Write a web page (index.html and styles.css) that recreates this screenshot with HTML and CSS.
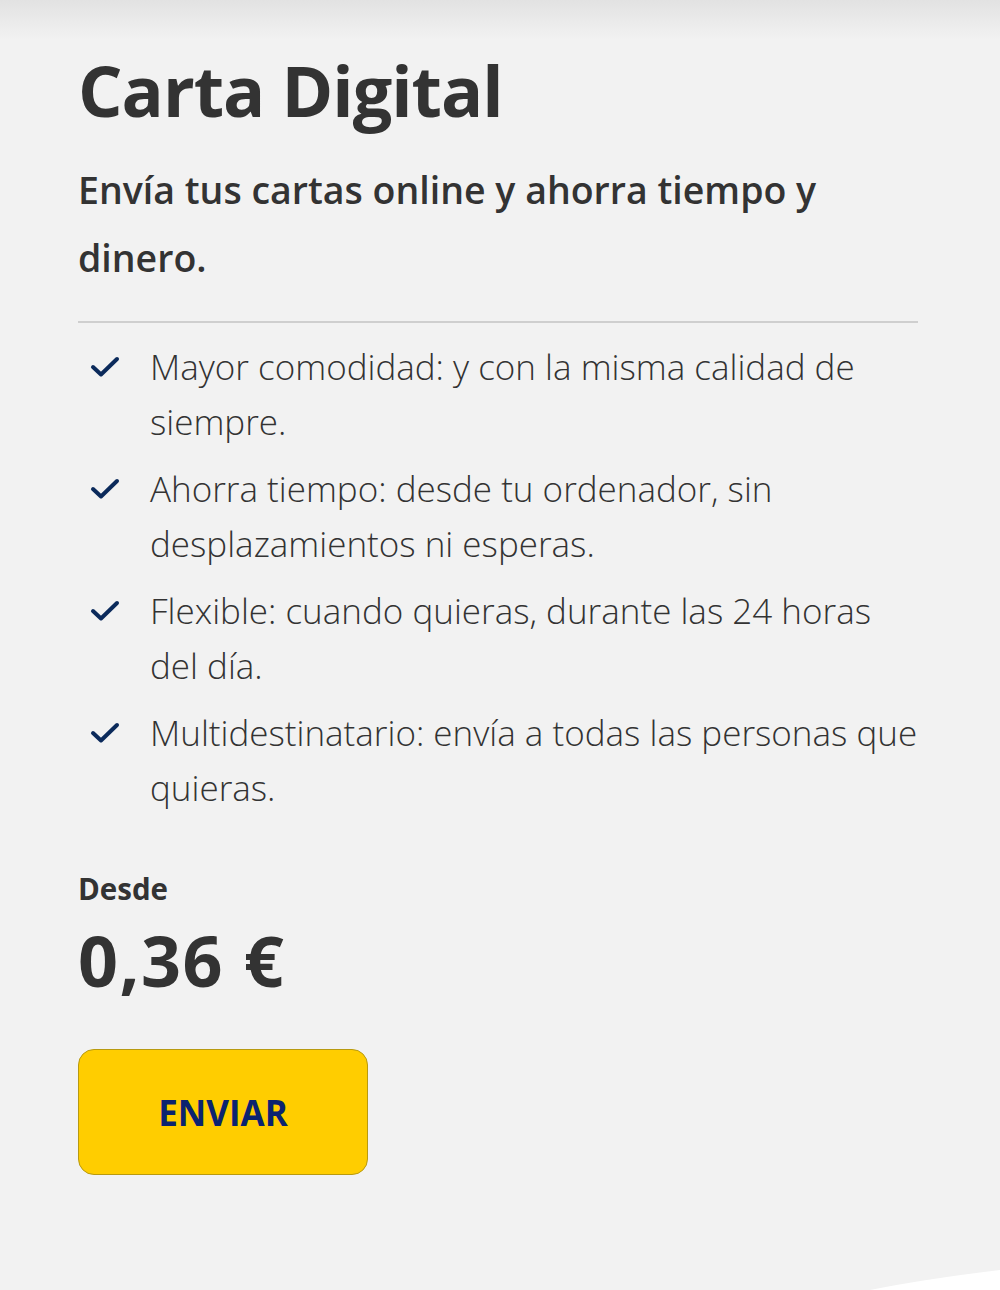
FILE: index.html
```html
<!DOCTYPE html>
<html lang="es">
<head>
  <meta charset="utf-8">
  <title>Carta Digital</title>
  <link rel="stylesheet" href="styles.css">
</head>
<body>
  <main class="product">
    <h1 class="title">Carta Digital</h1>
    <p class="lead">Envía tus cartas online y ahorra tiempo y dinero.</p>

    <ul class="benefits">
      <li>
        <svg class="check" viewBox="0 0 30 22"><path d="M3 11 L11 18.5 L27 3"/></svg>
        <span>Mayor comodidad: y con la misma calidad de siempre.</span>
      </li>
      <li>
        <svg class="check" viewBox="0 0 30 22"><path d="M3 11 L11 18.5 L27 3"/></svg>
        <span>Ahorra tiempo: desde tu ordenador, sin desplazamientos ni esperas.</span>
      </li>
      <li>
        <svg class="check" viewBox="0 0 30 22"><path d="M3 11 L11 18.5 L27 3"/></svg>
        <span>Flexible: cuando quieras, durante las 24 horas del día.</span>
      </li>
      <li>
        <svg class="check" viewBox="0 0 30 22"><path d="M3 11 L11 18.5 L27 3"/></svg>
        <span>Multidestinatario: envía a todas las personas que quieras.</span>
      </li>
    </ul>

    <div class="price">
      <div class="price-label">Desde</div>
      <div class="price-value">0,36 €</div>
    </div>

    <button class="send" type="button">ENVIAR</button>
  </main>

  <svg class="wave" viewBox="0 0 130 20" preserveAspectRatio="none">
    <path d="M0 20 Q55 9 130 0 L130 20 Z"/>
  </svg>
</body>
</html>
```

FILE: styles.css
```css
*,
*::before,
*::after {
  box-sizing: border-box;
}

body {
  margin: 0;
  height: 1290px;
  overflow: hidden;
  position: relative;
  font-family: "Open Sans", "Liberation Sans", sans-serif;
  color: #333;
  background: linear-gradient(#e2e2e2 0, #f2f2f2 40px) #f2f2f2;
}

.product {
  padding: 42px 0 0 78px;
  width: 918px;
}

.title {
  margin: 0;
  font-size: 70px;
  font-weight: 700;
  line-height: 96px;
  letter-spacing: -1px;
}

.lead {
  margin: 18px 0 0;
  font-size: 37.5px;
  font-weight: 600;
  line-height: 68px;
  padding: 0 40px 29px 0;
  border-bottom: 2px solid #cfcfcf;
}

.benefits {
  list-style: none;
  margin: 16px 0 0;
  padding: 0;
}

.benefits li {
  display: flex;
  gap: 30px;
  margin-bottom: 12px;
  font-size: 35px;
  font-weight: 300;
  line-height: 55px;
}

.check {
  flex: none;
  width: 30px;
  height: 22px;
  margin: 17px 0 0 12px;
}
.check path {
  fill: none;
  stroke: #0b2a5b;
  stroke-width: 4;
  stroke-linecap: round;
  stroke-linejoin: round;
}

.price {
  margin-top: 56px;
}
.price-label {
  font-size: 29.5px;
  font-weight: 700;
  line-height: 36px;
}
.price-value {
  font-size: 70px;
  font-weight: 700;
  line-height: 76px;
  margin-top: 15px;
  letter-spacing: 1.5px;
}

.send {
  display: block;
  margin-top: 51px;
  width: 290px;
  height: 126px;
  background: #ffcd00;
  border: 1.5px solid #b89a10;
  border-radius: 16px;
  color: #0b2370;
  font-family: inherit;
  font-size: 35px;
  font-weight: 700;
}

.wave {
  position: absolute;
  right: 0;
  bottom: 0;
  width: 130px;
  height: 20px;
}
.wave path {
  fill: #fff;
}
```
